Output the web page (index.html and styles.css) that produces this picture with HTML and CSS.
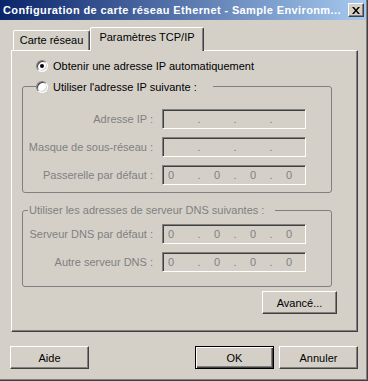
FILE: index.html
```html
<!DOCTYPE html>
<html lang="fr">
<head>
    <meta charset="UTF-8">
    <title>Configuration de carte réseau Ethernet</title>
    <link rel="stylesheet" href="styles.css">
</head>
<body>
    <div class="window">
        <!-- Title bar -->
        <div class="titlebar">
            <span class="title">Configuration de carte réseau Ethernet - Sample Environm...</span>
            <span class="close">
                <svg width="8" height="7" viewBox="0 0 8 7">
                    <path d="M0 0h2l2 2.5L6 0h2L5 3.5 8 7H6L4 4.5 2 7H0l3-3.5z" fill="#000"/>
                </svg>
            </span>
        </div>

        <div class="content">
            <!-- Tabs -->
            <div class="tabs">
                <div class="tab">Carte réseau</div>
                <div class="tab active">Paramètres TCP/IP</div>
            </div>

            <div class="panel">
                <div class="option">
                    <span class="radio checked"></span>
                    <span>Obtenir une adresse IP automatiquement</span>
                </div>

                <fieldset class="group">
                    <legend class="option legend-ip">
                        <span class="radio"></span>
                        <span>Utiliser l'adresse IP suivante :</span>
                    </legend>
                    <div class="rows rows-ip">
                        <div class="row">
                            <span class="label">Adresse IP :</span>
                            <span class="ipbox">
                                <span class="seg"></span><span class="dot">.</span>
                                <span class="seg"></span><span class="dot">.</span>
                                <span class="seg"></span><span class="dot">.</span>
                                <span class="seg"></span>
                            </span>
                        </div>
                        <div class="row">
                            <span class="label">Masque de sous-réseau :</span>
                            <span class="ipbox">
                                <span class="seg"></span><span class="dot">.</span>
                                <span class="seg"></span><span class="dot">.</span>
                                <span class="seg"></span><span class="dot">.</span>
                                <span class="seg"></span>
                            </span>
                        </div>
                        <div class="row">
                            <span class="label">Passerelle par défaut :</span>
                            <span class="ipbox">
                                <span class="seg">0</span><span class="dot">.</span>
                                <span class="seg">0</span><span class="dot">.</span>
                                <span class="seg">0</span><span class="dot">.</span>
                                <span class="seg">0</span>
                            </span>
                        </div>
                    </div>
                </fieldset>

                <fieldset class="group group-dns">
                    <legend class="legend-dns">Utiliser les adresses de serveur DNS suivantes :</legend>
                    <div class="rows rows-dns">
                        <div class="row">
                            <span class="label">Serveur DNS par défaut :</span>
                            <span class="ipbox">
                                <span class="seg">0</span><span class="dot">.</span>
                                <span class="seg">0</span><span class="dot">.</span>
                                <span class="seg">0</span><span class="dot">.</span>
                                <span class="seg">0</span>
                            </span>
                        </div>
                        <div class="row">
                            <span class="label">Autre serveur DNS :</span>
                            <span class="ipbox">
                                <span class="seg">0</span><span class="dot">.</span>
                                <span class="seg">0</span><span class="dot">.</span>
                                <span class="seg">0</span><span class="dot">.</span>
                                <span class="seg">0</span>
                            </span>
                        </div>
                    </div>
                </fieldset>

                <div class="actions">
                    <button class="btn btn-small">Avancé...</button>
                </div>
            </div>

            <!-- Dialog buttons -->
            <div class="footer">
                <button class="btn">Aide</button>
                <button class="btn default push">OK</button>
                <button class="btn">Annuler</button>
            </div>
        </div>
    </div>
</body>
</html>
```

FILE: styles.css
```css
/* Base */
body {
    margin: 0;
    font-family: "Liberation Sans", Arial, sans-serif;
    font-size: 11px;
    color: #000;
    background-color: #d4d0c8;
}

.window {
    box-sizing: border-box;
    width: 368px;
    height: 381px;
    background-color: #d4d0c8;
    border-right: 1px solid #404040;
    border-bottom: 1px solid #404040;
    box-shadow: inset -1px -1px #808080;
}

/* Title bar */
.titlebar {
    display: flex;
    align-items: center;
    height: 20px;
    width: 366px;
    background: linear-gradient(to right, #0a246a, #a6caf0);
}

.titlebar .title {
    flex: 1;
    padding-left: 3px;
    color: #fff;
    font-weight: bold;
    letter-spacing: 0.38px;
    white-space: nowrap;
    overflow: hidden;
}

.titlebar .close {
    box-sizing: border-box;
    display: flex;
    align-items: center;
    justify-content: center;
    width: 16px;
    height: 14px;
    margin-right: 2px;
    background-color: #d4d0c8;
    border: 1px solid;
    border-color: #fff #404040 #404040 #fff;
    box-shadow: inset -1px -1px #808080;
}

/* Content */
.content {
    padding: 7px 0 0 10px;
}

.tabs {
    display: flex;
    align-items: flex-end;
    height: 23px;
    margin-left: 3px;
}

.tab {
    box-sizing: border-box;
    height: 20px;
    width: 77px;
    padding-top: 3px;
    text-align: center;
    white-space: nowrap;
    background-color: #d4d0c8;
    border-top: 1px solid #fff;
    border-left: 1px solid #fff;
    border-right: 1px solid #404040;
    border-radius: 2px 2px 0 0;
    box-shadow: inset -1px 0 #808080;
}

.tab.active {
    position: relative;
    z-index: 1;
    width: 114px;
    height: 24px;
    margin-bottom: -1px;
    padding-top: 3px;
}

.panel {
    box-sizing: border-box;
    width: 347px;
    height: 282px;
    margin-left: 1px;
    border-top: 1px solid #fff;
    border-left: 1px solid #fff;
    border-right: 1px solid #404040;
    border-bottom: 1px solid #404040;
    box-shadow: inset -1px -1px #808080;
}

/* Radio options */
.option {
    display: flex;
    align-items: center;
    height: 12px;
    margin: 9px 0 0 24px;
    white-space: nowrap;
}

.radio {
    box-sizing: border-box;
    position: relative;
    flex: none;
    width: 12px;
    height: 12px;
    margin-right: 5px;
    border-radius: 50%;
    background-color: #fff;
    border: 1px solid;
    border-color: #808080 #fff #fff #808080;
    box-shadow: inset 1px 1px #404040, inset -1px -1px #d4d0c8;
}

.radio.checked::after {
    content: "";
    position: absolute;
    left: 3px;
    top: 3px;
    width: 4px;
    height: 4px;
    border-radius: 50%;
    background-color: #000;
}

/* Group boxes */
.group {
    box-sizing: border-box;
    width: 310px;
    margin: 8px 0 0 10px;
    padding: 0 0 7px 0;
    border: 1px solid #808080;
    border-radius: 3px;
    min-width: 0;
}

.legend-ip {
    box-sizing: border-box;
    width: 177px;
    height: 13px;
    margin: 0 0 0 13px;
    padding: 0;
}

.group-dns {
    margin-top: 11px;
    padding-bottom: 14px;
}

.legend-dns {
    box-sizing: border-box;
    width: 247px;
    height: 13px;
    line-height: 13px;
    margin-left: 5px;
    padding: 0 1px;
    color: #808080;
    white-space: nowrap;
}

.rows {
    display: flex;
    flex-direction: column;
    gap: 8px;
}

.rows-ip {
    padding-top: 16px;
}

.rows-dns {
    padding-top: 7px;
}

.row {
    display: flex;
    align-items: center;
    height: 20px;
}

.row .label {
    width: 130px;
    margin-right: 9px;
    text-align: right;
    white-space: nowrap;
    color: #808080;
}

/* IP address field (disabled) */
.ipbox {
    box-sizing: border-box;
    display: flex;
    align-items: center;
    width: 144px;
    height: 20px;
    padding: 0;
    background-color: #d4d0c8;
    border: 1px solid;
    border-color: #808080 #fff #fff #808080;
    box-shadow: inset 1px 1px #404040, inset -1px -1px #d4d0c8;
    color: #808080;
}

.ipbox .seg {
    box-sizing: border-box;
    width: 32px;
    text-align: center;
}

.ipbox .seg:first-child {
    width: 34px;
    padding-left: 5px;
    text-align: left;
}

.ipbox .dot {
    width: 4px;
    text-align: center;
}

/* Buttons */
.actions {
    display: flex;
    justify-content: flex-end;
    margin-top: 4px;
    padding-right: 20px;
}

.btn {
    box-sizing: border-box;
    width: 79px;
    height: 23px;
    padding: 0;
    font-family: "Liberation Sans", Arial, sans-serif;
    font-size: 11px;
    color: #000;
    background-color: #d4d0c8;
    border: 1px solid;
    border-color: #fff #404040 #404040 #fff;
    box-shadow: inset -1px -1px #808080;
}

.btn-small {
    width: 75px;
}

.btn.default {
    border: 1px solid #000;
    box-shadow: inset 1px 1px #fff, inset -1px -1px #404040, inset -2px -2px #808080;
}

.footer {
    display: flex;
    gap: 5px;
    width: 348px;
    margin-top: 14px;
}

.footer .push {
    margin-left: auto;
}
```
